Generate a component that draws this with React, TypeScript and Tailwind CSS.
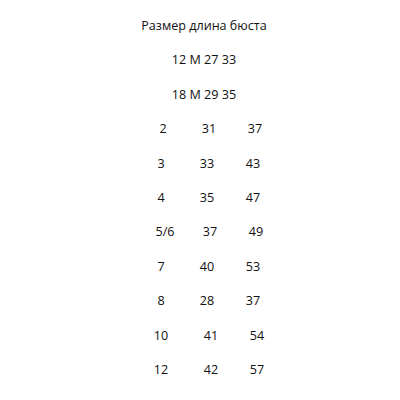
const rows: { cells: [string, string, string]; cls: [string, string, string] }[] = [
  { cells: ["2", "31", "37"], cls: ["translate-x-[2px]", "translate-x-[2px]", "translate-x-[2px]"] },
  { cells: ["3", "33", "43"], cls: ["", "", ""] },
  { cells: ["4", "35", "47"], cls: ["", "", ""] },
  { cells: ["5/6", "37", "49"], cls: ["translate-x-[4px]", "translate-x-[3px]", "translate-x-[3px]"] },
  { cells: ["7", "40", "53"], cls: ["", "", ""] },
  { cells: ["8", "28", "37"], cls: ["", "", ""] },
  { cells: ["10", "41", "54"], cls: ["", "translate-x-[4px]", "translate-x-[4px]"] },
  { cells: ["12", "42", "57"], cls: ["", "translate-x-[4px]", "translate-x-[4px]"] },
];

export default function App() {
  return (
    <main className="w-[400px] h-[400px] bg-white text-[#111] text-[12.6px] leading-[34.4px] pt-[9px] font-['Open_Sans',sans-serif]">
      <div className="flex flex-col items-center pl-[8px]">
        <p>Размер длина бюста</p>
        <p>12 M 27 33</p>
        <p>18 M 29 35</p>
      </div>
      <div className="flex flex-col items-center pl-[14px]">
        {rows.map((r, i) => (
          <div key={i} className="grid grid-cols-[46px_46px_46px]">
            {r.cells.map((c, j) => (
              <span key={j} className={"text-center " + r.cls[j]}>{c}</span>
            ))}
          </div>
        ))}
      </div>
    </main>
  );
}
